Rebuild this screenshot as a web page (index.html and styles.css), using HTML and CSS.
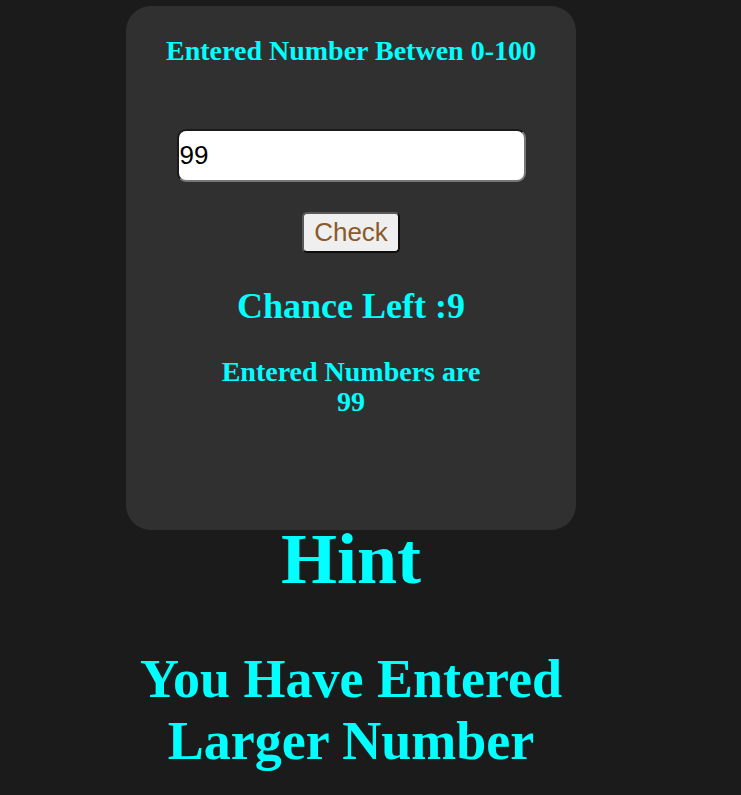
FILE: index.html
```html
<!DOCTYPE html>
<html>
<head>
<meta charset="utf-8">
<link rel="stylesheet" href="styles.css">
</head>
<body>
<div class="page">
  <div class="card">
    <h3 class="title">Entered Number Betwen 0-100</h3>
    <input class="guess" type="text" value="99">
    <button class="check">Check</button>
    <h2 class="chance">Chance Left :9</h2>
    <h3 class="entered">Entered Numbers are<span class="list">99</span></h3>
  </div>
  <h1 class="hint">Hint</h1>
  <h2 class="message">You Have Entered Larger Number</h2>
</div>
</body>
</html>
```

FILE: styles.css
```css
html, body {
  margin: 0;
  padding: 0;
  background: #1c1b1c;
}
body {
  font-family: "Liberation Serif", "Times New Roman", serif;
  color: #00ffff;
}
.page {
  width: 702px;
  padding-top: 6px;
  display: flex;
  flex-direction: column;
  align-items: center;
}
.card {
  width: 450px;
  height: 524px;
  box-sizing: border-box;
  background: #303030;
  border-radius: 25px;
  display: flex;
  flex-direction: column;
  align-items: center;
  padding-top: 29px;
}
.title {
  margin: 0;
  font-size: 28px;
  font-weight: bold;
  text-align: center;
}
.guess {
  margin-top: 62px;
  width: 349px;
  height: 53px;
  box-sizing: border-box;
  border: 2px solid;
  border-color: #1a1a1a #777777 #777777 #1a1a1a;
  border-radius: 9px;
  background: #ffffff;
  padding: 0 1px;
  font-family: "Liberation Sans", Arial, sans-serif;
  font-size: 26px;
  color: #000000;
  outline: none;
}
.check {
  margin-top: 30px;
  width: 98px;
  height: 41px;
  box-sizing: border-box;
  border: 2px solid;
  border-color: #5a5a5a #0d0d0d #0d0d0d #5a5a5a;
  border-radius: 5px;
  background: #efefef;
  padding: 0;
  font-family: "Liberation Sans", Arial, sans-serif;
  font-size: 26px;
  color: #8b5a2b;
}
.chance {
  margin: 32px 0 0;
  font-size: 36px;
  font-weight: bold;
  text-align: center;
}
.entered {
  margin: 30px 0 0;
  font-size: 28px;
  line-height: 30px;
  font-weight: bold;
  text-align: center;
}
.list {
  display: block;
}
.hint {
  margin: -12px 0 0;
  font-size: 72px;
  font-weight: bold;
  text-align: center;
}
.message {
  width: 450px;
  margin: 47px 0 0;
  font-size: 54px;
  font-weight: bold;
  text-align: center;
}
```
